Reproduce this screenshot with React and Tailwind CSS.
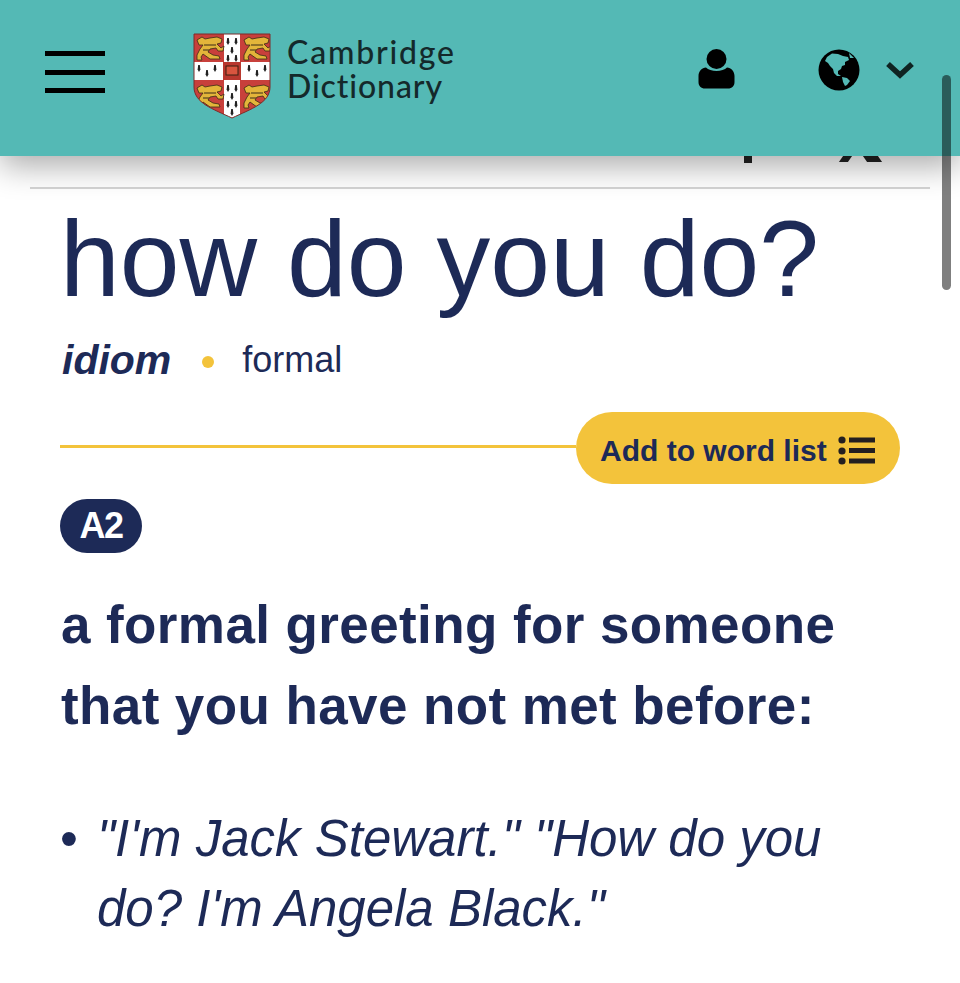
const Lion = ({ x, y }) => (
  <g transform={`translate(${x} ${y})`}>
    <path d="M2 4 L7 1 L10 3 L15 2 L22 1 L27 3 L26 7 L22 8 L26 12 L29 10 L28 15 L23 15 L21 12 L15 13 L13 16 L18 19 L24 20 L25 23 L15 23 L8 18 L6 21 L7 24 L2 24 L2 19 L5 13 L8 9 L4 9 Z" fill="#e3b53a" stroke="#3a2d16" strokeWidth="0.8" />
    <path d="M9 9 L21 9 M8 14 L14 14" stroke="#3a2d16" strokeWidth="1" />
  </g>
);
const Erm = ({ x, y }) => (
  <g transform={`translate(${x} ${y})`} fill="#222">
    <path d="M-0.8 -3 H0.8 L1.4 1.5 L0 4 L-1.4 1.5 Z" />
  </g>
);
const Shield = () => (
  <svg width="78" height="86" viewBox="0 0 78 86" className="shrink-0">
    <defs>
      <clipPath id="sh"><path d="M1 1 H77 V54 C77 70 58 76 39 85 C20 76 1 70 1 54 Z" /></clipPath>
    </defs>
    <g clipPath="url(#sh)">
      <rect width="78" height="86" fill="#c8403b" />
      <rect x="31" width="16" height="86" fill="#fff" />
      <rect y="29" width="78" height="18" fill="#fff" />
      <Lion x="2" y="3" />
      <Lion x="49" y="3" />
      <Lion x="2" y="51" />
      <Lion x="49" y="51" />
      {[[35,8],[43,8],[39,17],[35,25],[43,25],[35,55],[43,55],[39,63],[35,71],[43,71],[39,79],[6,35],[14,40],[22,35],[56,35],[64,40],[72,35]].map(([x, y], i) => <Erm key={i} x={x} y={y} />)}
      <rect x="30" y="29" width="18" height="18" fill="#b9382f" />
      <rect x="33" y="33" width="12" height="9" fill="#d9553f" stroke="#3a2012" strokeWidth="1" />
    </g>
    <path d="M1 1 H77 V54 C77 70 58 76 39 85 C20 76 1 70 1 54 Z" fill="none" stroke="#7d2b2a" strokeWidth="1" />
  </svg>
);
const Person = () => (
  <svg width="37" height="40" viewBox="0 0 37 40">
    <circle cx="18.5" cy="10" r="10" fill="#000" />
    <path d="M8 18.5 C12 23 25 23 29 18.5 C33 19 36.5 22 36.5 27 V33 C36.5 37 34 39.5 30 39.5 H7 C3 39.5 0.5 37 0.5 33 V27 C0.5 22 4 19 8 18.5 Z" fill="#000" />
  </svg>
);
const Globe = () => (
  <svg width="42" height="42" viewBox="0 0 42 42">
    <circle cx="21" cy="21" r="20.5" fill="#000" />
    <path d="M9 8 L14 4.5 L20 5 L25 7 L30 8 L31 11 L27 13 L27 16 L24 17 L23 20 L20 22 L20 25 L23 27 L19 27 L16 24 L15 20 L12 17 L10 14 L7 12 Z" fill="#54b9b5" />
    <path d="M24 28 L29 29 L32 32 L29 36 L27 37 L25 33 Z" fill="#54b9b5" />
    <path d="M31 4 L36 9 L32 9 Z" fill="#54b9b5" />
  </svg>
);
const ListIcon = () => (
  <svg width="37" height="29" viewBox="0 0 37 29" fill="#231f20">
    <circle cx="4" cy="4" r="3.6" /><circle cx="4" cy="15" r="3.6" /><circle cx="4" cy="25" r="3.6" />
    <rect x="11" y="1.5" width="26" height="5" /><rect x="11" y="12" width="26" height="5" /><rect x="11" y="22.5" width="26" height="5" />
  </svg>
);

export default function App() {
  return (
    <div className="relative h-[983px] w-[960px] overflow-hidden bg-white font-['Liberation_Sans',Arial,sans-serif] text-[#1d2a57]">
      <header className="relative z-10 flex h-[156px] items-start bg-[#54b9b5] shadow-[0_10px_30px_rgba(0,0,0,0.33)]">
        <div className="ml-[45px] mt-[51px] flex h-[42px] w-[60px] flex-col justify-between">
          <span className="h-[5px] bg-black" /><span className="h-[5px] bg-black" /><span className="h-[5px] bg-black" />
        </div>
        <div className="ml-[88px] mt-[33px] flex w-[505px] items-start gap-[16px]">
          <Shield />
          <div className="mt-[2px] font-['Lato',sans-serif] text-[32px] font-medium leading-[34px] text-[#14292b]">
            <div className="tracking-[1.8px]">Cambridge</div>
            <div className="tracking-[0.9px]">Dictionary</div>
          </div>
        </div>
        <div className="mt-[49px]"><Person /></div>
        <div className="ml-[83px] mt-[49px]"><Globe /></div>
        <svg width="30" height="18" viewBox="0 0 30 18" className="ml-[25px] mt-[61px]"><path d="M3 3 L15 14 L27 3" fill="none" stroke="#0f2422" strokeWidth="5.5" /></svg>
      </header>
      <div className="absolute left-[942px] top-[75px] z-20 h-[215px] w-[9px] rounded-full bg-black/50" />
      <div className="relative h-[33px]">
        <span className="absolute left-[744px] top-0 h-[7px] w-[8px] bg-[#222]" />
        <span className="absolute left-[841px] top-0 h-[6px] w-[9px] -skew-x-[35deg] bg-[#222]" />
        <span className="absolute left-[865px] top-0 h-[6px] w-[15px] skew-x-[35deg] bg-[#222]" />
        <div className="absolute bottom-0 left-[30px] right-[30px] h-[2px] bg-[#d4d4d4]" />
      </div>
      <main className="px-[60px]">
        <h1 className="mt-[15px] text-[107.5px] font-normal leading-[110px]">how do you do?</h1>
        <div className="mt-[23px] flex items-center">
          <b className="ml-[2px] text-[41px] italic leading-[46px]">idiom</b>
          <span className="ml-[31px] mt-[4px] h-[12px] w-[12px] rounded-full bg-[#f3c33b]" />
          <span className="ml-[28px] text-[36px] leading-[46px]">formal</span>
        </div>
        <div className="mt-[29px] flex items-center">
          <div className="mb-[4px] h-[3px] flex-1 bg-[#f3c33b]" />
          <div className="flex h-[72px] w-[324px] items-center gap-[11px] rounded-full bg-[#f3c33b] pl-[24px] pt-[4px] text-[30px] font-bold text-[#1d2a57]">
            Add to word list <ListIcon />
          </div>
        </div>
        <div className="mt-[15px] flex h-[54px] w-[82px] items-center justify-center rounded-full bg-[#1d2a57] text-[36px] font-bold tracking-[-1.5px] text-white">A2</div>
        <p className="ml-[1px] mt-[31px] text-[53px] font-bold leading-[81px] tracking-[0.4px]">a formal greeting for someone that you have not met before:</p>
        <div className="mt-[58px] flex text-[51px] italic leading-[70px]">
          <span className="w-[37px] shrink-0 not-italic">•</span>
          <p>"I'm Jack Stewart." "How do you do? I'm Angela Black."</p>
        </div>
      </main>
    </div>
  );
}
